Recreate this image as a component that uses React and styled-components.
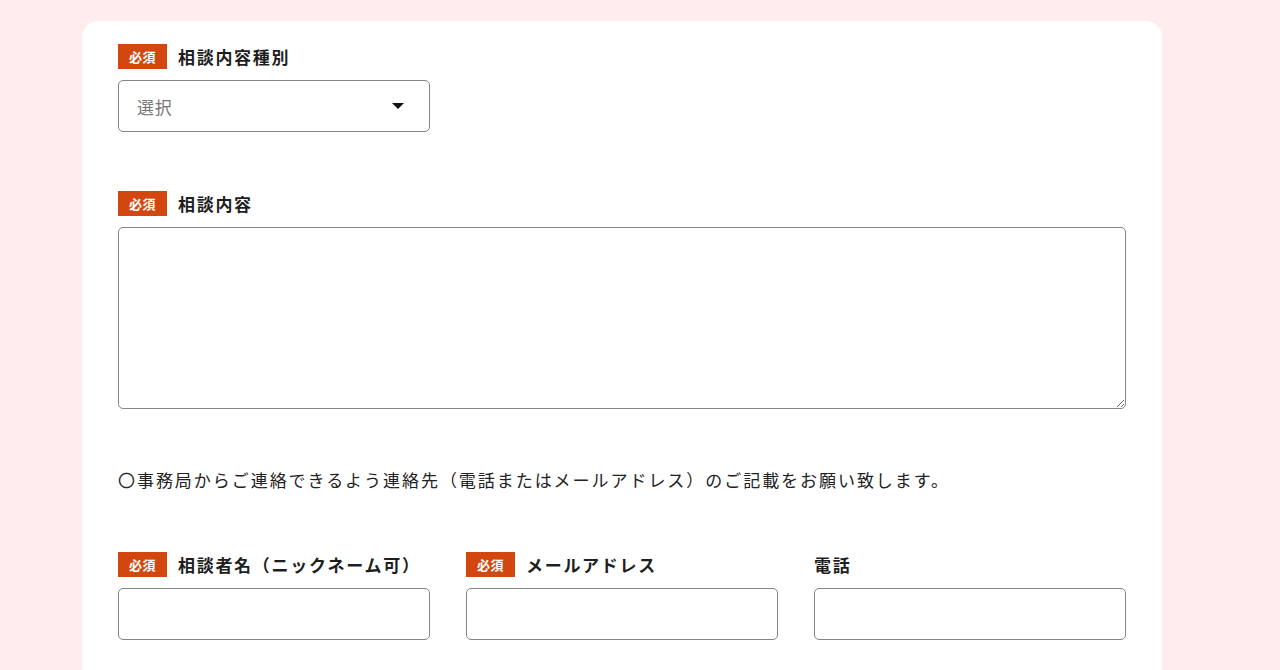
import React from 'react';
import styled, { createGlobalStyle } from 'styled-components';

const GlobalStyle = createGlobalStyle`
  html, body {
    margin: 0;
    padding: 0;
    background: #ffeded;
  }

  body {
    font-family: "Noto Sans CJK JP", "Noto Sans", sans-serif;
    color: #222;
  }
`;

const Page = styled.div`
  padding-top: 21px;
  min-height: 100vh;
  box-sizing: border-box;
`;

const Card = styled.form`
  width: 1080px;
  margin-left: 82px;
  box-sizing: border-box;
  padding: 22px 36px 80px;
  background: #fff;
  border-radius: 16px;
  display: flex;
  flex-direction: column;
  gap: 58px;
`;

const Group = styled.div`
  display: flex;
  flex-direction: column;
  gap: 11px;
`;

const LabelRow = styled.label`
  display: flex;
  align-items: center;
  gap: 11px;
  height: 26px;
  font-size: 17px;
  font-weight: 700;
  letter-spacing: 0.1em;
  line-height: 1;
  color: #1e1e1e;
`;

const Badge = styled.span`
  display: inline-flex;
  align-items: center;
  justify-content: center;
  width: 49px;
  height: 25px;
  background: #d2470f;
  color: #fff;
  font-size: 13px;
  font-weight: 700;
  letter-spacing: 0.04em;
`;

const SelectWrap = styled.div`
  position: relative;
  width: 312px;

  svg {
    position: absolute;
    right: 26px;
    top: 23px;
    pointer-events: none;
  }
`;

const Select = styled.select`
  appearance: none;
  width: 100%;
  height: 52px;
  box-sizing: border-box;
  padding: 0 18px;
  border: 1px solid #858585;
  border-radius: 5px;
  background: #fff;
  font-family: inherit;
  font-size: 17px;
  color: #777;
  letter-spacing: 0.05em;
  outline: none;
`;

const TextArea = styled.textarea`
  display: block;
  width: 100%;
  height: 182px;
  box-sizing: border-box;
  border: 1px solid #858585;
  border-radius: 5px;
  padding: 12px 18px;
  font-family: inherit;
  font-size: 16px;
  outline: none;
`;

const Note = styled.p`
  margin: 0;
  font-size: 17px;
  line-height: 26px;
  letter-spacing: 0.115em;
  color: #222;
`;

const Columns = styled.div`
  display: grid;
  grid-template-columns: repeat(3, 1fr);
  column-gap: 36px;
`;

const Input = styled.input`
  display: block;
  width: 100%;
  height: 52px;
  box-sizing: border-box;
  border: 1px solid #858585;
  border-radius: 5px;
  padding: 0 18px;
  font-family: inherit;
  font-size: 16px;
  outline: none;
`;

const Caret = () => (
  <svg width="12" height="6" viewBox="0 0 12 6">
    <path d="M0 0 L12 0 L6 6 Z" fill="#111" />
  </svg>
);

const Field = ({ label, required, children }) => (
  <Group>
    <LabelRow>
      {required && <Badge>必須</Badge>}
      {label}
    </LabelRow>
    {children}
  </Group>
);

const App = () => (
  <Page>
    <GlobalStyle />
    <Card onSubmit={(e) => e.preventDefault()}>
      <Field label="相談内容種別" required>
        <SelectWrap>
          <Select defaultValue="">
            <option value="">選択</option>
            <option value="a">生活について</option>
            <option value="b">その他</option>
          </Select>
          <Caret />
        </SelectWrap>
      </Field>

      <Field label="相談内容" required>
        <TextArea />
      </Field>

      <Note>〇事務局からご連絡できるよう連絡先（電話またはメールアドレス）のご記載をお願い致します。</Note>

      <Columns>
        <Field label="相談者名（ニックネーム可）" required>
          <Input type="text" />
        </Field>
        <Field label="メールアドレス" required>
          <Input type="email" />
        </Field>
        <Field label="電話">
          <Input type="tel" />
        </Field>
      </Columns>
    </Card>
  </Page>
);

export default App;
